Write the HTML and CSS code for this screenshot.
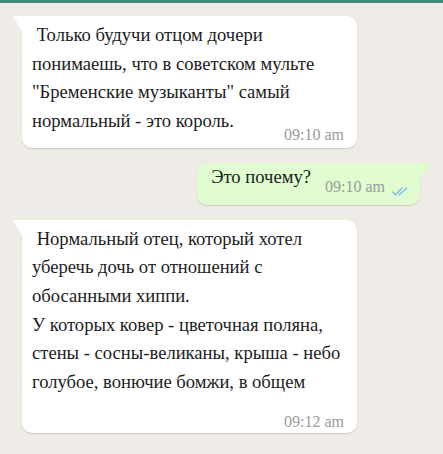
FILE: index.html
```html
<!DOCTYPE html>
<html lang="ru">
<head>
<meta charset="utf-8">
<title>Чат</title>
<link rel="stylesheet" href="styles.css">
</head>
<body>
<div class="topbar"></div>
<main class="chat">
  <div class="msg msg-in">
    <p class="msg-text">&nbsp;Только будучи отцом дочери<br>понимаешь, что в советском мульте<br>"Бременские музыканты" самый<br>нормальный - это король.<span class="msg-time msg-time-float">09:10 am</span></p>
  </div>

  <div class="msg msg-out">
    <span class="msg-text">Это почему?</span>
    <span class="msg-time">09:10 am</span>
    <svg class="ticks" width="16" height="9" viewBox="0 0 16 9" aria-hidden="true">
      <path d="M0.8 5 L3.4 7.8 L10.2 1" fill="none" stroke="currentColor" stroke-width="1.3" stroke-linecap="round" stroke-linejoin="round"/>
      <path d="M6.6 7.8 L7.2 7.8 L14.8 1" fill="none" stroke="currentColor" stroke-width="1.3" stroke-linecap="round" stroke-linejoin="round"/>
    </svg>
  </div>

  <div class="msg msg-in msg-long">
    <p class="msg-text">&nbsp;Нормальный отец, который хотел<br>уберечь дочь от отношений с<br>обосанными хиппи.<br>У которых ковер - цветочная поляна,<br>стены - сосны-великаны, крыша - небо<br>голубое, вонючие бомжи, в общем</p>
    <div class="msg-foot"><span class="msg-time">09:12 am</span></div>
  </div>
</main>
</body>
</html>
```

FILE: styles.css
```css
html,
body {
  margin: 0;
  padding: 0;
}

body {
  width: 443px;
  height: 454px;
  overflow: hidden;
  background: #efebe6;
  color: #1d1d1d;
  font-family: "Liberation Serif", "Times New Roman", serif;
}

.topbar {
  height: 3px;
  background: #3f8a7a;
}

.chat {
  display: flex;
  flex-direction: column;
  padding: 13px 23px 0 22px;
  gap: 15px;
}

.msg {
  position: relative;
  box-shadow: 0 1px 1.5px rgba(0, 0, 0, 0.14);
}

/* incoming messages: white, tail on the left */
.msg-in {
  align-self: flex-start;
  width: 335px;
  box-sizing: border-box;
  background: #ffffff;
  border-radius: 0 10px 10px 10px;
  padding: 5px 13px 3px 10px;
  display: flow-root;
}

.msg-in::before {
  content: "";
  position: absolute;
  top: 0;
  left: -9px;
  width: 0;
  height: 0;
  border-top: 16px solid #ffffff;
  border-left: 9px solid transparent;
}

.msg-text {
  margin: 0;
  font-size: 18.6px;
  line-height: 28.67px;
}

.msg-time {
  font-size: 16px;
  line-height: 20px;
  color: #9b9b9b;
  white-space: nowrap;
}

.msg-time-float {
  float: right;
  margin-top: 17.5px;
  margin-left: 12px;
}

.msg-long {
  padding-bottom: 1px;
}

.msg-foot {
  margin-top: 15.5px;
  text-align: right;
}

/* outgoing message: light green, tail on the right */
.msg-out {
  align-self: flex-end;
  display: flex;
  align-items: flex-start;
  background: #e1fcd0;
  border-radius: 10px 0 10px 10px;
  padding: 0 12px 0 14px;
  height: 42px;
  box-sizing: border-box;
}

.msg-out::after {
  content: "";
  position: absolute;
  top: 0;
  right: -11px;
  width: 0;
  height: 0;
  border-top: 15px solid #e1fcd0;
  border-right: 11px solid transparent;
}

.msg-out .msg-text {
  white-space: nowrap;
}

.msg-out .msg-time {
  margin-left: 14px;
  margin-top: 14.5px;
}

.ticks {
  margin-left: 7px;
  margin-top: 24px;
  color: #72bfe8;
}
```
